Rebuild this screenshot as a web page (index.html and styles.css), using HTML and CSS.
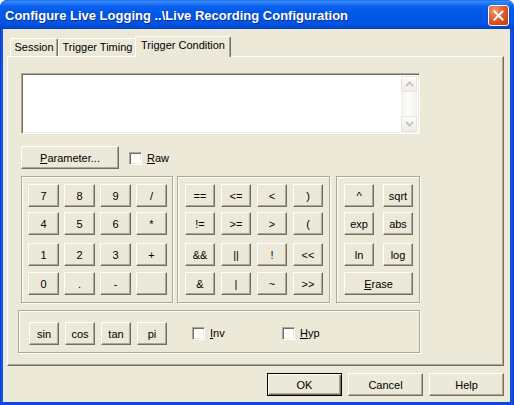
FILE: index.html
```html
<!DOCTYPE html>
<html>
<head>
<meta charset="utf-8">
<title>Configure Live Logging</title>
<link rel="stylesheet" href="styles.css">
</head>
<body>
<div class="window">
  <div class="titlebar">
    <span class="title">Configure Live Logging ..\Live Recording Configuration</span>
    <span class="close"><svg width="11" height="11" viewBox="0 0 11 11"><path d="M1.5 1.5 L9.5 9.5 M9.5 1.5 L1.5 9.5" stroke="#fff" stroke-width="2" stroke-linecap="square"/></svg></span>
  </div>
  <div class="client">
    <div class="tabs">
      <div class="tab t-session">Session</div>
      <div class="tab t-timing">Trigger Timing</div>
      <div class="tab t-cond active">Trigger Condition</div>
    </div>
    <div class="panel">
      <div class="editbox">
        <div class="editarea"></div>
        <div class="vscroll">
          <div class="sbtn"><svg width="9" height="6" viewBox="0 0 9 6"><path d="M1 5 L4.5 1.5 L8 5" fill="none" stroke="#c9c7bd" stroke-width="2"/></svg></div>
          <div class="strack"></div>
          <div class="sbtn"><svg width="9" height="6" viewBox="0 0 9 6"><path d="M1 1 L4.5 4.5 L8 1" fill="none" stroke="#c9c7bd" stroke-width="2"/></svg></div>
        </div>
      </div>
      <div class="paramrow">
        <button class="btn param"><u>P</u>arameter...</button>
        <label class="check raw"><span class="box"></span><span><u>R</u>aw</span></label>
      </div>
      <div class="pads">
        <div class="group g1">
          <div class="row r1"><button class="btn">7</button><button class="btn">8</button><button class="btn">9</button><button class="btn">/</button></div>
          <div class="row r2"><button class="btn">4</button><button class="btn">5</button><button class="btn">6</button><button class="btn">*</button></div>
          <div class="row r3"><button class="btn">1</button><button class="btn">2</button><button class="btn">3</button><button class="btn">+</button></div>
          <div class="row r4"><button class="btn">0</button><button class="btn">.</button><button class="btn">-</button><button class="btn"></button></div>
        </div>
        <div class="group g2">
          <div class="row r1"><button class="btn">==</button><button class="btn">&lt;=</button><button class="btn">&lt;</button><button class="btn">)</button></div>
          <div class="row r2"><button class="btn">!=</button><button class="btn">&gt;=</button><button class="btn">&gt;</button><button class="btn">(</button></div>
          <div class="row r3"><button class="btn">&amp;&amp;</button><button class="btn">||</button><button class="btn">!</button><button class="btn">&lt;&lt;</button></div>
          <div class="row r4"><button class="btn">&amp;</button><button class="btn">|</button><button class="btn">~</button><button class="btn">&gt;&gt;</button></div>
        </div>
        <div class="group g3">
          <div class="row r1"><button class="btn">^</button><button class="btn">sqrt</button></div>
          <div class="row r2"><button class="btn">exp</button><button class="btn">abs</button></div>
          <div class="row r3"><button class="btn">ln</button><button class="btn">log</button></div>
          <div class="row r4"><button class="btn erase"><u>E</u>rase</button></div>
        </div>
      </div>
      <div class="group trig">
        <button class="btn">sin</button><button class="btn">cos</button><button class="btn">tan</button><button class="btn">pi</button>
        <label class="check inv"><span class="box"></span><span><u>I</u>nv</span></label>
        <label class="check hyp"><span class="box"></span><span><u>H</u>yp</span></label>
      </div>
    </div>
    <div class="footer">
      <button class="btn dlg default">OK</button>
      <button class="btn dlg">Cancel</button>
      <button class="btn dlg">Help</button>
    </div>
  </div>
</div>
</body>
</html>
```

FILE: styles.css
```css
* { box-sizing: border-box; }
html, body { margin: 0; padding: 0; }
body {
  width: 514px;
  height: 405px;
  overflow: hidden;
  background: #fff;
  font-family: "Liberation Sans", Arial, sans-serif;
  font-size: 11px;
  color: #000;
}
.window {
  width: 514px;
  height: 405px;
  display: flex;
  flex-direction: column;
  background: linear-gradient(to right, #0831d9 0, #1c5ee8 2px, #0848dc 3px, #0848dc 510px, #1a58e4 512px, #0831c0 514px);
  border-radius: 7px 7px 0 0;
  overflow: hidden;
}
.titlebar {
  height: 29px;
  flex: none;
  display: flex;
  align-items: center;
  padding: 0 5px 0 5px;
  background: linear-gradient(to bottom, #0a5ae0 0, #3a8dff 1px, #2b7cf8 3px, #0c62ee 6px, #0058e8 12px, #0057e6 20px, #0054e0 24px, #0049d2 27px, #003cbd 29px);
}
.title {
  flex: 1;
  color: #fff;
  font-family: "Liberation Sans", Arial, sans-serif;
  font-weight: bold;
  font-size: 13px;
  text-shadow: 1px 1px 0 #0f2f9a;
  white-space: nowrap;
  padding-top: 1px;
}
.close {
  width: 21px;
  height: 21px;
  border: 1px solid #fff;
  border-radius: 3px;
  background: radial-gradient(circle at 30% 25%, #f39a7a 0, #e5683f 35%, #d44518 75%, #c23a12 100%);
  display: flex;
  align-items: center;
  justify-content: center;
  margin-top: 1px;
}
.client {
  flex: 1;
  margin: 0 4px 3px 3px;
  background: #ece9d8;
  display: flex;
  flex-direction: column;
}
.tabs {
  display: flex;
  align-items: flex-end;
  height: 27px;
  padding-left: 7px;
  flex: none;
}
.tab {
  height: 18px;
  border-top: 1px solid #fff;
  border-left: 1px solid #fff;
  border-right: 1px solid #716f64;
  box-shadow: inset -1px 0 0 #aca899;
  border-radius: 2px 2px 0 0;
  text-align: center;
  line-height: 16px;
  background: #ece9d8;
  white-space: nowrap;
}
.t-session { width: 48px; }
.t-timing { width: 79px; }
.t-cond { width: 92px; }
.tab.active {
  width: 96px;
  height: 21px;
  margin: 0 -2px -1px -2px;
  position: relative;
  z-index: 1;
  line-height: 17px;
}
.panel {
  margin-left: 4px;
  width: 497px;
  height: 310px;
  flex: none;
  border-style: solid;
  border-width: 1px;
  border-color: #fff #716f64 #716f64 #fff;
  box-shadow: inset -1px -1px 0 #aca899;
  display: flex;
  flex-direction: column;
  align-items: flex-start;
}
.editbox {
  margin: 16px 0 0 13px;
  width: 399px;
  height: 61px;
  border: 1px solid;
  border-color: #aca899 #fff #fff #aca899;
  box-shadow: inset 1px 1px 0 #716f64, inset -1px -1px 0 #f1efe2;
  background: #fff;
  display: flex;
  padding: 2px 2px 1px 2px;
}
.editarea { flex: 1; }
.vscroll {
  width: 16px;
  display: flex;
  flex-direction: column;
  background: linear-gradient(to right, #f3f1ec, #fdfdfb 40%, #f4f3ee);
}
.sbtn {
  height: 16px;
  flex: none;
  border: 1px solid #e6e4dc;
  border-radius: 2px;
  background: linear-gradient(to bottom, #fbfbf9, #efede6);
  display: flex;
  align-items: center;
  justify-content: center;
}
.strack { flex: 1; }
.btn {
  margin: 0;
  padding: 0;
  font-family: "Liberation Sans", Arial, sans-serif;
  font-size: 11px;
  color: #000;
  background: #ece9d8;
  border: 1px solid;
  border-color: #fff #716f64 #716f64 #fff;
  box-shadow: inset -1px -1px 0 #aca899;
  height: 23px;
  text-align: center;
  line-height: 20px;
  white-space: nowrap;
}
.paramrow {
  margin: 12px 0 0 13px;
  display: flex;
  align-items: flex-start;
}
.param { width: 98px; }
.check {
  display: flex;
  align-items: center;
  white-space: nowrap;
}
.box {
  width: 13px;
  height: 13px;
  flex: none;
  background: #fff;
  border: 1px solid;
  border-color: #aca899 #fff #fff #aca899;
  box-shadow: inset 1px 1px 0 #716f64, inset -1px -1px 0 #f1efe2;
  margin-right: 5px;
}
.raw { margin: 6px 0 0 10px; }
.pads {
  margin: 7px 0 0 13px;
  display: flex;
}
.group {
  height: 127px;
  border: 1px solid #aca899;
  box-shadow: inset 1px 1px 0 #fff, 1px 1px 0 #fff;
  display: flex;
  flex-direction: column;
  padding-top: 7px;
}
.row { display: flex; }
.r2 { margin-top: 5px; }
.r3 { margin-top: 8px; }
.r4 { margin-top: 6px; }
.g1 { width: 152px; padding-left: 6px; }
.g1 .row { gap: 5px; }
.g1 .btn { width: 31px; }
.g2 { width: 153px; margin-left: 4px; padding-left: 7px; }
.g2 .row { gap: 6px; }
.g2 .btn { width: 30px; }
.g3 { width: 84px; margin-left: 6px; padding-left: 7px; }
.g3 .row { gap: 9px; }
.g3 .btn { width: 30px; }
.g3 .btn.erase { width: 69px; }
.group.trig {
  margin: 7px 0 0 10px;
  width: 402px;
  height: 43px;
  flex-direction: row;
  align-items: flex-start;
  padding: 11px 0 0 10px;
  gap: 6px;
}
.trig .btn { width: 30px; }
.trig .check { height: 23px; }
.inv { margin-left: 19px; width: 84px; }
.box + span { line-height: 13px; }
.footer {
  display: flex;
  justify-content: flex-end;
  gap: 6px;
  margin-top: 7px;
  padding-right: 6px;
}
.dlg { width: 75px; }
.dlg.default {
  border: 1px solid #000;
  box-shadow: inset 1px 1px 0 #fff, inset -1px -1px 0 #716f64, inset -2px -2px 0 #aca899;
}
```
